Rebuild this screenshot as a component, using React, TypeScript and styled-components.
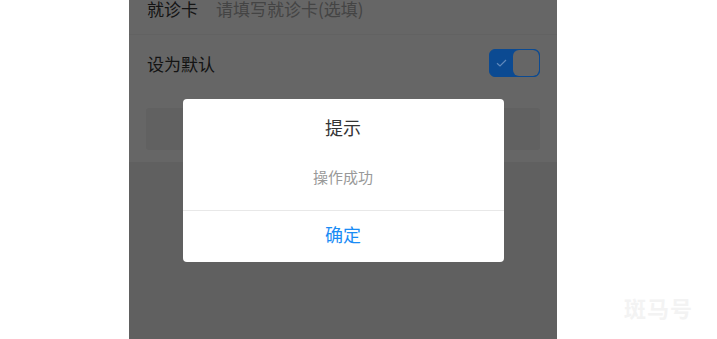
import * as React from 'react';
import styled, { createGlobalStyle } from 'styled-components';

const GlobalStyle = createGlobalStyle`
  html, body {
    margin: 0;
    padding: 0;
    background: #ffffff;
    font-family: "Noto Sans CJK SC", "Noto Sans", sans-serif;
    overflow: hidden;
  }
`;

const Page = styled.div`
  position: relative;
  width: 717px;
  height: 339px;
  background: #ffffff;
`;

const Screen = styled.div`
  position: relative;
  margin-left: 129px;
  width: 428px;
  height: 339px;
  background: #f0f0f0;
  overflow: hidden;
`;

const Form = styled.div`
  margin-top: -17px;
  background: #ffffff;
`;

const Row = styled.div<{ $height: number; $divider?: boolean }>`
  display: flex;
  align-items: center;
  height: ${p => p.$height}px;
  padding: 0 17px 0 18px;
  box-sizing: border-box;
  border-bottom: ${p => (p.$divider ? '1px solid #f6f6f6' : 'none')};
`;

const Label = styled.span`
  font-size: 17px;
  color: #333;
  margin-right: 18px;
  flex: none;
`;

const Placeholder = styled.span`
  flex: 1;
  font-size: 17px;
  color: #aaa;
`;

const Spacer = styled.div`
  flex: 1;
`;

/* sits above the mask, colours already dimmed to match the screenshot */
const Switch = styled.div`
  position: relative;
  z-index: 1;
  display: flex;
  width: 51px;
  height: 28px;
  box-sizing: border-box;
  border: 1px solid #0b4a92;
  border-radius: 6px;
  background: #0b4a92;
  overflow: hidden;
`;

const SwitchCheck = styled.div`
  flex: 1;
  display: flex;
  align-items: center;
  justify-content: center;
`;

const SwitchKnob = styled.div`
  width: 26px;
  height: 26px;
  box-sizing: border-box;
  border-radius: 6px;
  background: #666666;
`;

const ButtonArea = styled.div`
  padding: 17px 17px 12px 17px;
  background: #ffffff;
`;

const SaveButton = styled.div`
  height: 42px;
  border-radius: 3px;
  background: #f2f2f2;
`;

const Mask = styled.div`
  position: absolute;
  inset: 0;
  background: rgba(0, 0, 0, 0.6);
  display: flex;
  justify-content: center;
  align-items: flex-start;
  padding-top: 99px;
  box-sizing: border-box;
`;

const Dialog = styled.div`
  width: 321px;
  background: #ffffff;
  border-radius: 4px;
  overflow: hidden;
  text-align: center;
`;

const DialogBody = styled.div`
  padding: 18px 20px 23px;
  border-bottom: 1px solid #e8e8e8;
`;

const DialogTitle = styled.div`
  font-size: 18px;
  line-height: 20px;
  color: #333;
`;

const DialogMessage = styled.div`
  margin-top: 30px;
  font-size: 15px;
  line-height: 20px;
  color: #999;
`;

const DialogButton = styled.div`
  height: 51px;
  line-height: 47px;
  font-size: 18px;
  color: #1a8cf5;
`;

const Watermark = styled.div`
  position: absolute;
  right: 24px;
  bottom: 16px;
  font-size: 22px;
  font-weight: bold;
  letter-spacing: 1px;
  color: #f3f3f3;
`;

const App: React.FC = () => (
  <Page>
    <GlobalStyle />
    <Screen>
      <Form>
        <Row $height={52} $divider>
          <Label>就诊卡</Label>
          <Placeholder>请填写就诊卡(选填)</Placeholder>
        </Row>
        <Row $height={56}>
          <Label>设为默认</Label>
          <Spacer />
          <Switch>
            <SwitchCheck>
              <svg width="11" height="8" viewBox="0 0 11 8" fill="none">
                <path d="M1 4.2 L4 7 L10 1" stroke="#5f88bb" strokeWidth="1.2" />
              </svg>
            </SwitchCheck>
            <SwitchKnob />
          </Switch>
        </Row>
        <ButtonArea>
          <SaveButton />
        </ButtonArea>
      </Form>
      <Mask>
        <Dialog>
          <DialogBody>
            <DialogTitle>提示</DialogTitle>
            <DialogMessage>操作成功</DialogMessage>
          </DialogBody>
          <DialogButton>确定</DialogButton>
        </Dialog>
      </Mask>
    </Screen>
    <Watermark>斑马号</Watermark>
  </Page>
);

export default App;
